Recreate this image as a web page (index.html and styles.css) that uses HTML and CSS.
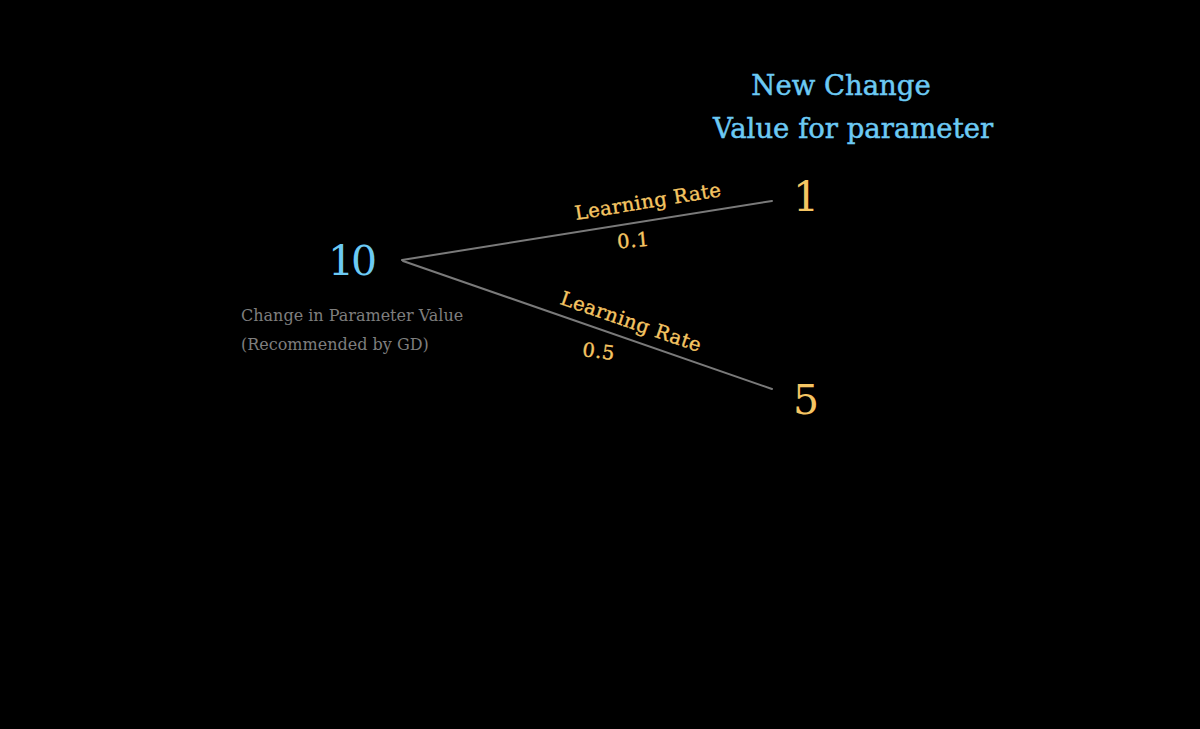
FILE: index.html
```html
<!DOCTYPE html>
<html>
<head>
<meta charset="utf-8">
<link rel="stylesheet" href="styles.css">
</head>
<body>
<main class="slide">
  <svg class="canvas" width="1200" height="729" viewBox="0 0 1200 729">
    <line class="edge" x1="402" y1="260" x2="772" y2="201"/>
    <line class="edge" x1="403" y1="261" x2="772" y2="389"/>

    <text class="title" x="841" y="95">New Change</text>
    <text class="title" x="853" y="138">Value for parameter</text>

    <text class="num num-blue num-tight" x="351" y="275">10</text>
    <text class="num num-gold" x="806" y="211">1</text>
    <text class="num num-gold" x="806" y="414">5</text>

    <text class="caption" x="241" y="321">Change in Parameter Value</text>
    <text class="caption" x="241" y="350">(Recommended by GD)</text>

    <text class="rate" x="649" y="208" transform="rotate(-9.3 649 208)">Learning Rate</text>
    <text class="rate" x="634" y="247" transform="rotate(-5 634 247)">0.1</text>
    <text class="rate" x="629" y="328" transform="rotate(19.1 629 328)">Learning Rate</text>
    <text class="rate" x="598" y="358" transform="rotate(7 598 358)">0.5</text>
  </svg>
</main>
</body>
</html>
```
FILE: styles.css
```css
html, body {
  margin: 0;
  padding: 0;
  background: #000;
}
.slide {
  width: 1200px;
  height: 729px;
  background: #000;
  overflow: hidden;
}
.canvas {
  display: block;
}
.edge {
  stroke: #7a7a7a;
  stroke-width: 2;
  stroke-linecap: round;
}
.title {
  font-family: "DejaVu Serif", serif;
  font-size: 27.5px;
  fill: #6ccaf4;
  stroke: #6ccaf4;
  stroke-width: 0.5px;
  text-anchor: middle;
}
.num {
  font-family: "DejaVu Serif", serif;
  font-size: 41px;
  text-anchor: middle;
}
.num-tight {
  letter-spacing: -3px;
}
.num-blue { fill: #6ccaf4; }
.num-gold { fill: #f5c563; }
.caption {
  font-family: "DejaVu Serif", serif;
  font-size: 16px;
  fill: #7e7e7e;
}
.rate {
  font-family: "DejaVu Serif", serif;
  font-size: 19.5px;
  letter-spacing: 0.5px;
  fill: #f5c563;
  stroke: #f5c563;
  stroke-width: 0.4px;
  text-anchor: middle;
}
```
